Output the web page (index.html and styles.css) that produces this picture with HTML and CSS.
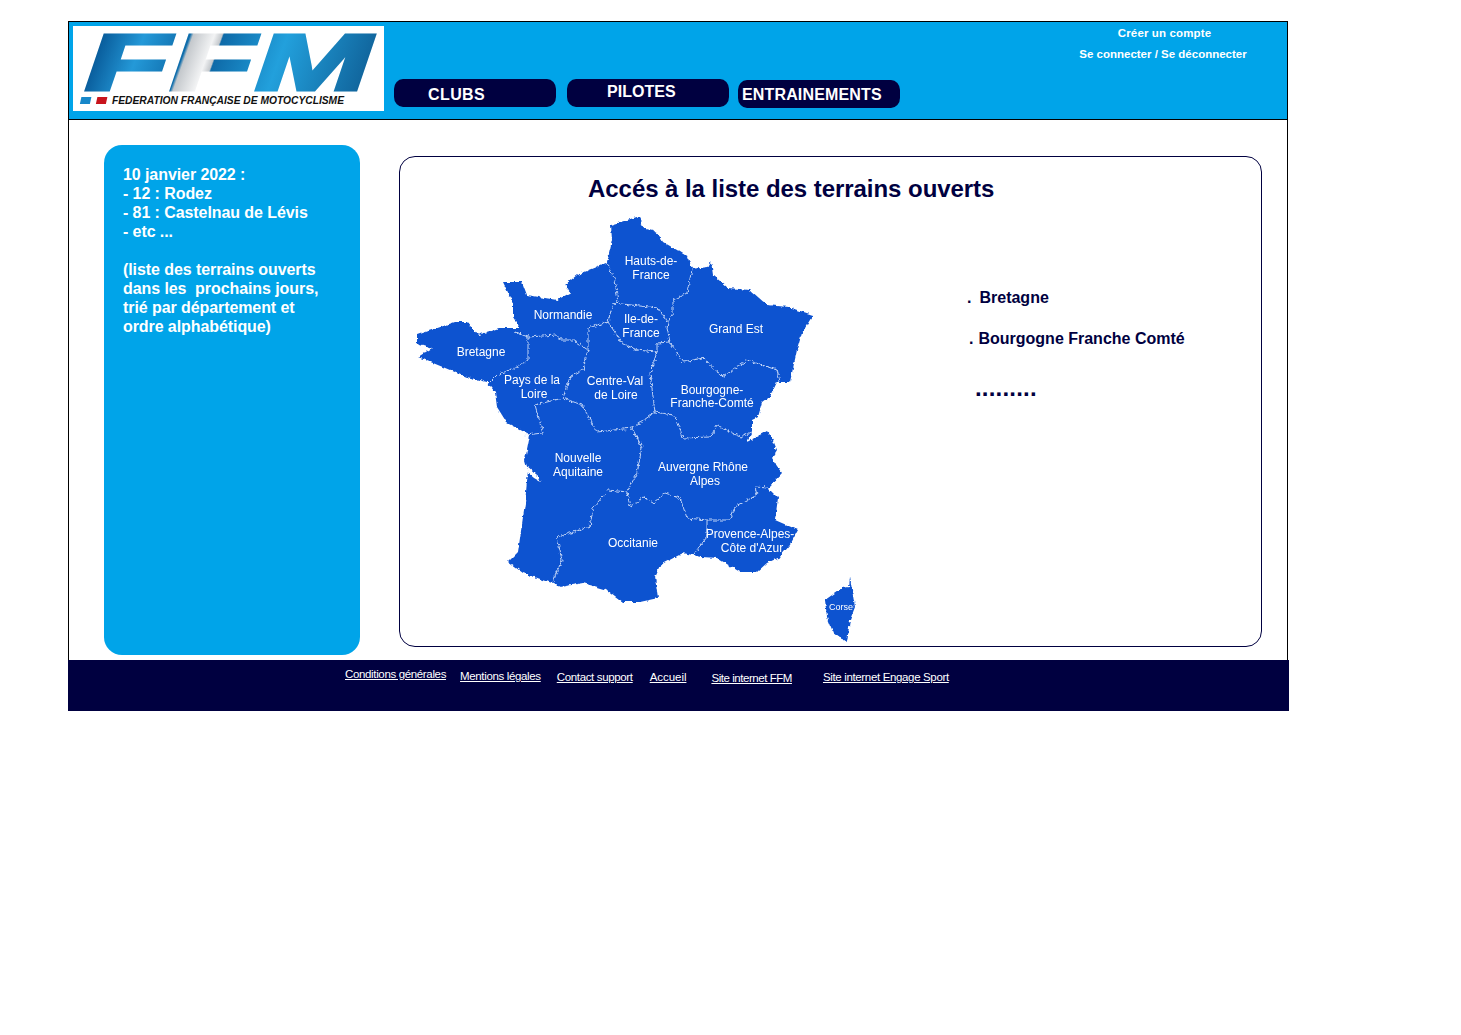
FILE: index.html
```html
<!DOCTYPE html>
<html lang="fr">
<head>
<meta charset="utf-8">
<title>FFM - Terrains ouverts</title>
<link rel="stylesheet" href="styles.css">
</head>
<body>
<div class="page">
  <header class="header">
    <svg class="logo" viewBox="73 26 311 85" width="311" height="85" role="img" aria-label="FFM">
      <defs>
        <linearGradient id="ffmGrad" gradientUnits="userSpaceOnUse" x1="0" y1="0" x2="168" y2="35">
          <stop offset="0" stop-color="#0a5f9e"/>
          <stop offset=".13" stop-color="#2499d8"/>
          <stop offset=".28" stop-color="#0f6dab"/>
          <stop offset=".29" stop-color="#c4c8cc"/>
          <stop offset=".36" stop-color="#f2f3f4"/>
          <stop offset=".385" stop-color="#c4c8cc"/>
          <stop offset=".39" stop-color="#0e6aa8"/>
          <stop offset=".6" stop-color="#22a0dc"/>
          <stop offset="1" stop-color="#0b5288"/>
        </linearGradient>
      </defs>
      <text class="logo-mark" transform="translate(85 89.5) scale(1.74 1)" fill="url(#ffmGrad)" stroke="url(#ffmGrad)">FFM</text>
      <rect x="81" y="97" width="10" height="7" fill="#1787c9" transform="skewX(-12) translate(21 0)"/>
      <rect x="97" y="97" width="10" height="7" fill="#c8141c" transform="skewX(-12) translate(21 0)"/>
      <text class="logo-sub" x="112" y="104" textLength="232" lengthAdjust="spacingAndGlyphs">FEDERATION FRANÇAISE DE MOTOCYCLISME</text>
    </svg>
    <nav class="nav">
      <a class="nav-btn nav-clubs" href="#">CLUBS</a>
      <a class="nav-btn nav-pilotes" href="#">PILOTES</a>
      <a class="nav-btn nav-entr" href="#">ENTRAINEMENTS</a>
    </nav>
    <div class="account">
      <a class="account-create" href="#">Créer un compte</a>
      <a class="account-login" href="#">Se connecter / Se déconnecter</a>
    </div>
  </header>

  <main class="content">
    <aside class="news">
      <p>10 janvier 2022 :<br>- 12 : Rodez<br>- 81 : Castelnau de Lévis<br>- etc ...</p>
      <p>(liste des terrains ouverts<br>dans les&nbsp; prochains jours,<br>trié par département et<br>ordre alphabétique)</p>
    </aside>
    <section class="panel">
      <h1 class="title">Accés à la liste des terrains ouverts</h1>
      <div class="panel-body">
        <svg class="map" viewBox="410 210 450 435" width="450" height="435" role="img" aria-label="Carte des régions de France">
          <defs>
            <filter id="rough" x="-5%" y="-5%" width="110%" height="110%">
              <feTurbulence type="fractalNoise" baseFrequency=".22" numOctaves="2" seed="4"/>
              <feDisplacementMap in="SourceGraphic" scale="4.5" xChannelSelector="R" yChannelSelector="G"/>
              <feGaussianBlur stdDeviation=".3"/>
            </filter>
            <filter id="wiggle" x="-5%" y="-5%" width="110%" height="110%">
              <feTurbulence type="fractalNoise" baseFrequency=".3" numOctaves="2" seed="9"/>
              <feDisplacementMap in="SourceGraphic" scale="5" xChannelSelector="R" yChannelSelector="G"/>
            </filter>
            <filter id="soft" x="-5%" y="-5%" width="110%" height="110%">
              <feGaussianBlur stdDeviation=".25"/>
            </filter>
          </defs>
          <g filter="url(#rough)">
            <polygon class="land" points="640,216 643,228 657,232 663,242 677,250 688,257 692,269 708,267 711,261 713,275 728,288 750,290 767,305 788,307 813,315 802,333 797,350 790,382 777,382 770,397 762,403 758,417 752,420 752,433 747,442 767,431 773,440 777,450 772,458 782,473 768,488 778,498 775,520 798,530 790,545 780,557 767,563 757,572 740,572 717,558 702,557 683,553 660,565 655,577 658,598 640,602 623,602 607,590 583,583 560,587 552,583 523,573 508,562 518,552 525,503 528,470 525,460 530,435 507,423 497,407 495,392 487,382 467,377 433,363 418,357 432,348 417,343 417,335 455,322 467,322 478,335 500,328 520,328 513,317 513,303 503,282 522,282 527,295 557,300 570,293 565,285 577,275 607,263 612,240 611,225"/>
            <polygon class="land" points="850,577 852,590 855,607 850,620 847,642 833,632 827,617 825,600 842,588 849,587"/>
            <polygon class="cut" points="528,466 535,472 541,482 534,478 527,472"/>
          </g>
          <g class="borders" filter="url(#wiggle)">
            <polyline points="515,332 528,337 528,360 517,367 497,375 490,382"/>
            <polyline points="528,337 557,335 560,340 573,340 588,350"/>
            <polyline points="588,350 588,328 608,322 613,303 618,302 615,280 607,263"/>
            <polyline points="613,303 658,308 668,322"/>
            <polyline points="692,269 687,293 673,300 673,313 668,322"/>
            <polyline points="608,322 622,343 637,350 657,352 657,343 670,342 667,328 668,322"/>
            <polyline points="670,342 683,362 703,358 723,377 747,360 777,370 780,382"/>
            <polyline points="657,352 650,373 655,412"/>
            <polyline points="588,350 583,370 570,377 563,398"/>
            <polyline points="563,398 535,405 543,433 525,435"/>
            <polyline points="563,398 582,405 597,432 632,428 644,420 655,412"/>
            <polyline points="655,412 673,415 677,420 683,438 710,437 717,425 740,437 752,432"/>
            <polyline points="632,428 642,447 637,473 627,492"/>
            <polyline points="627,492 608,490 593,508 590,527 557,537 562,560 552,583"/>
            <polyline points="627,492 630,507 643,497 653,503 665,493 680,498 687,518 707,520"/>
            <polyline points="707,520 730,520 735,507 757,495 755,487 768,488"/>
            <polyline points="707,520 707,537 693,555"/>
          </g>
          <g class="labels" filter="url(#soft)">
            <text x="651" y="265">Hauts-de-</text>
            <text x="651" y="279">France</text>
            <text x="563" y="319">Normandie</text>
            <text x="641" y="323">Ile-de-</text>
            <text x="641" y="337">France</text>
            <text x="736" y="333">Grand Est</text>
            <text x="481" y="356">Bretagne</text>
            <text x="532" y="384">Pays de la</text>
            <text x="534" y="398">Loire</text>
            <text x="615" y="385">Centre-Val</text>
            <text x="616" y="399">de Loire</text>
            <text x="712" y="394">Bourgogne-</text>
            <text x="712" y="407">Franche-Comté</text>
            <text x="578" y="462">Nouvelle</text>
            <text x="578" y="476">Aquitaine</text>
            <text x="703" y="471">Auvergne Rhône</text>
            <text x="705" y="485">Alpes</text>
            <text x="633" y="547">Occitanie</text>
            <text x="750" y="538">Provence-Alpes-</text>
            <text x="752" y="552">Côte d'Azur</text>
            <text class="label-small" x="841" y="610">Corse</text>
          </g>
        </svg>
        <ul class="regions">
          <li class="region region-first">.<span class="region-name region-name-first">Bretagne</span></li>
          <li class="region region-second">.<span class="region-name">Bourgogne Franche Comté</span></li>
          <li class="region-more">.........</li>
        </ul>
      </div>
    </section>
  </main>

  <footer class="footer">
    <a class="f-link f1" href="#">Conditions générales</a>
    <a class="f-link f2" href="#">Mentions légales</a>
    <a class="f-link f3" href="#">Contact support</a>
    <a class="f-link f4" href="#">Accueil</a>
    <a class="f-link f5" href="#">Site internet FFM</a>
    <a class="f-link f6" href="#">Site internet Engage Sport</a>
  </footer>
</div>
</body>
</html>
```
FILE: styles.css
```css
* { box-sizing: border-box; }
html, body { margin: 0; padding: 0; background: #fff; }
body { font-family: "Liberation Sans", Arial, sans-serif; color: #000040; }
a { color: inherit; }

.page {
  width: 1220px;
  margin: 21px 0 0 68px;
  border: 1px solid #000;
  border-bottom: 0;
}

/* header */
.header {
  display: flex;
  align-items: flex-start;
  height: 98px;
  background: #00a4e9;
  border-bottom: 1px solid #000;
  padding: 4px 0 0 4px;
}
.logo { display: block; flex: none; background: #fff; overflow: visible; }
.logo-mark {
  font: italic 700 80px "Liberation Sans", Arial, sans-serif;
  stroke-width: 3.2;
}
.logo-sub {
  font: italic 700 10px "Liberation Sans", Arial, sans-serif;
  fill: #111;
}
.nav {
  display: flex;
  gap: 10px;
  margin: 53px 0 0 10px;
  flex: none;
}
.nav-btn {
  display: block;
  width: 162px;
  height: 28px;
  background: #000040;
  border-radius: 9px / 10px;
  color: #fff;
  font-size: 16px;
  font-weight: 700;
  line-height: 28px;
  text-decoration: none;
}
.nav-clubs { padding: 2px 0 0 34px; letter-spacing: .4px; }
.nav-pilotes { padding: 0 0 0 40px; margin-left: 1px; letter-spacing: .05px; line-height: 25px; }
.nav-entr { padding: 0 0 0 4px; margin: 1px 0 0 -1px; letter-spacing: .15px; line-height: 29px; }
.account {
  flex: none;
  display: flex;
  flex-direction: column;
  align-items: center;
  width: 180px;
  margin: 0 0 0 173px;
  color: #fff;
  font-size: 11.5px;
  font-weight: 700;
  line-height: 14px;
}
.account a { text-decoration: none; }
.account-create { letter-spacing: .13px; margin-left: 3px; }
.account-login { margin-top: 7px; }

/* body */
.content {
  display: flex;
  align-items: flex-start;
  height: 540px;
  padding-left: 35px;
}
.news {
  flex: none;
  width: 256px;
  height: 510px;
  margin-top: 25px;
  padding: 20px 0 0 19px;
  background: #00a4e9;
  border-radius: 18px;
  color: #fff;
  font-size: 16px;
  font-weight: 700;
  line-height: 19px;
  letter-spacing: -.08px;
}
.news p { margin: 0 0 19px; }
.panel {
  flex: none;
  width: 863px;
  height: 491px;
  margin: 36px 0 0 39px;
  border: 1px solid #000040;
  border-radius: 16px;
}
.title {
  margin: 0;
  padding: 18px 0 0 188px;
  height: 53px;
  font-size: 24px;
  line-height: 28px;
  font-weight: 700;
  letter-spacing: -.05px;
  color: #000040;
}
.panel-body { display: flex; align-items: flex-start; padding-left: 10px; }
.map { display: block; flex: none; }
.land { fill: #1052d0; }
.cut { fill: #fff; }
.borders polyline { fill: none; stroke: #d5e2fa; stroke-width: .9; }
.labels text {
  font-family: "Liberation Sans", Arial, sans-serif;
  font-size: 12px;
  fill: #fff;
  text-anchor: middle;
}
.labels .label-small { font-size: 9px; }

.regions {
  list-style: none;
  margin: 0 0 0 107px;
  padding: 78px 0 0;
  font-size: 16px;
  font-weight: 700;
  line-height: 19px;
  color: #000040;
}
.region { white-space: nowrap; }
.region-second { margin: 22px 0 0 2px; }
.region-name { margin-left: 5px; }
.region-name-first { margin-left: 8px; }
.region-more { margin: 26px 0 0 8px; font-size: 24px; line-height: 28px; letter-spacing: .2px; }

/* footer */
.footer {
  display: flex;
  align-items: flex-start;
  width: 1221px;
  height: 51px;
  margin-left: -1px;
  background: #000040;
  color: #fff;
  font-size: 11.5px;
  line-height: 14px;
  padding-left: 277px;
}
.f-link { display: block; white-space: nowrap; letter-spacing: -.35px; }
.f1 { margin-top: 7px; }
.f2 { margin: 9px 0 0 14px; }
.f3 { margin: 10px 0 0 16px; }
.f4 { margin: 10px 0 0 17px; letter-spacing: -.05px; }
.f5 { margin: 11px 0 0 25px; letter-spacing: -.45px; }
.f6 { margin: 10px 0 0 31px; }
```
